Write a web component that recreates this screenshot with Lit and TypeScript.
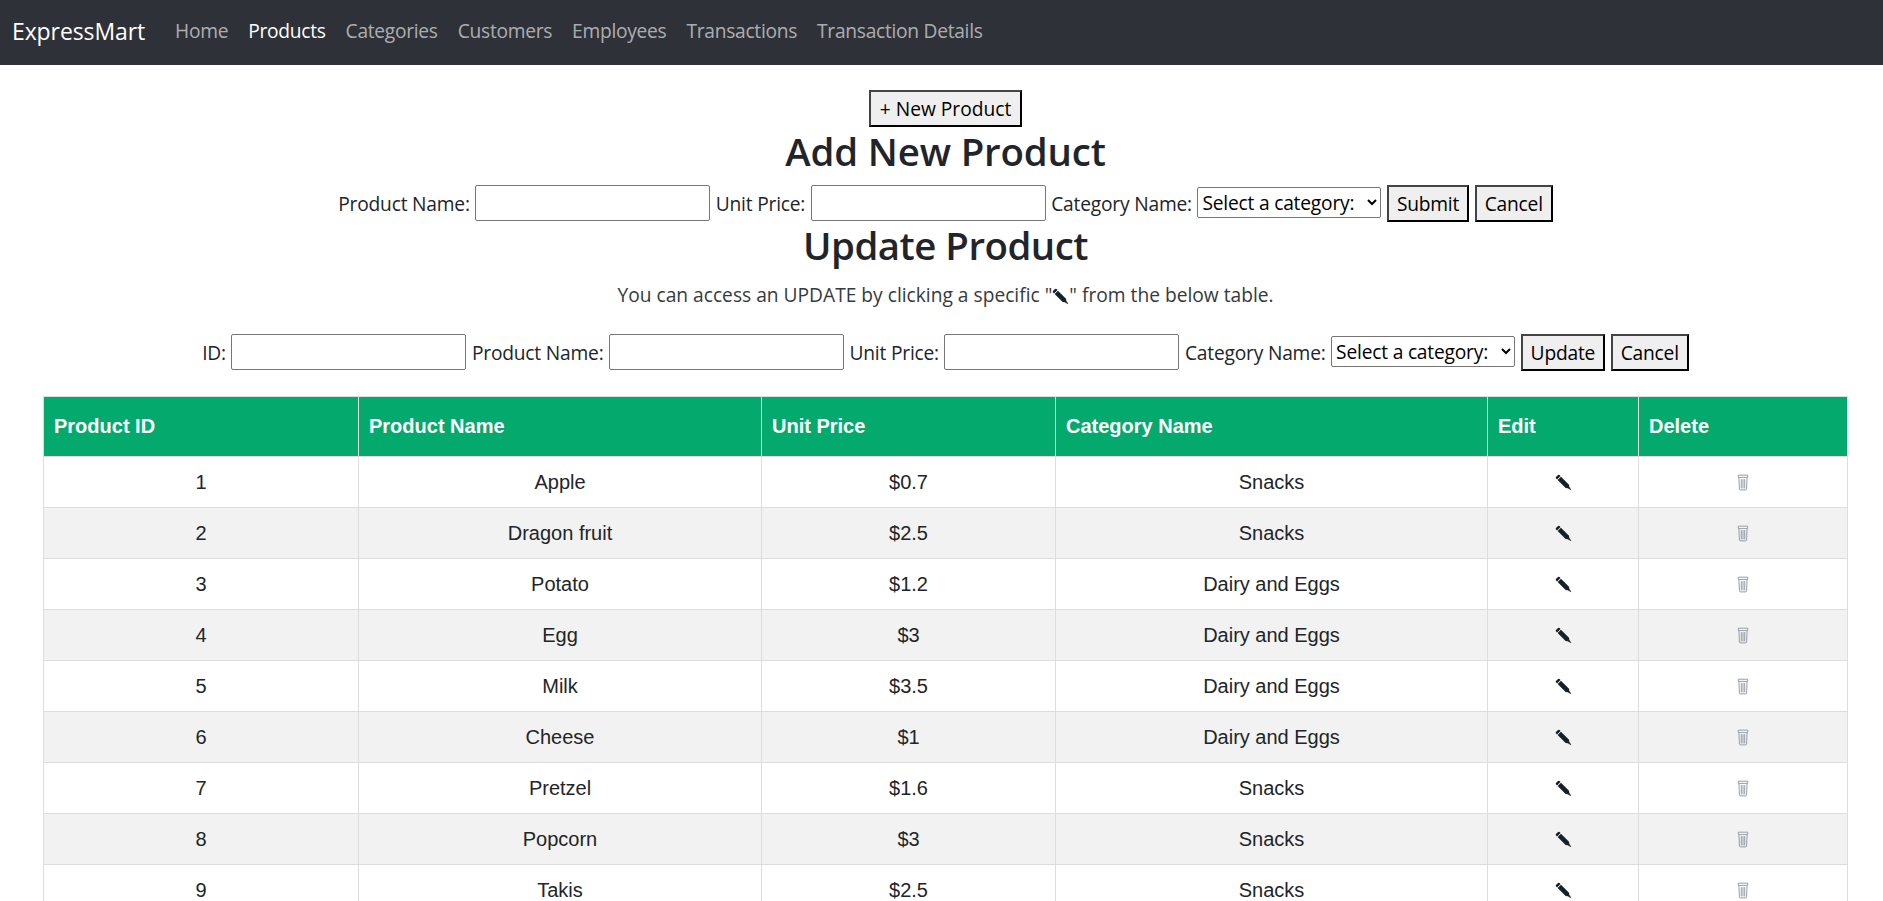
import { LitElement, html, css, svg } from 'lit';
import { customElement } from 'lit/decorators.js';

const PRODUCTS = [
  [1, 'Apple', '$0.7', 'Snacks'],
  [2, 'Dragon fruit', '$2.5', 'Snacks'],
  [3, 'Potato', '$1.2', 'Dairy and Eggs'],
  [4, 'Egg', '$3', 'Dairy and Eggs'],
  [5, 'Milk', '$3.5', 'Dairy and Eggs'],
  [6, 'Cheese', '$1', 'Dairy and Eggs'],
  [7, 'Pretzel', '$1.6', 'Snacks'],
  [8, 'Popcorn', '$3', 'Snacks'],
  [9, 'Takis', '$2.5', 'Snacks'],
];

const NAV = ['Home', 'Products', 'Categories', 'Customers', 'Employees', 'Transactions', 'Transaction Details'];

const pencil = html`<svg class="pencil" viewBox="0 0 16 16" width="17" height="17">
  <path d="M.9 2.9 L2.9 .9 Q3.6 .4 4.3 1 L5.2 1.9 L1.9 5.2 L1 4.3 Q.4 3.6 .9 2.9Z" fill="#1c1c1c"/>
  <path d="M5.6 2.5 L13.2 10 L13.7 13.7 L10 13.2 L2.5 5.6Z" fill="#14212c"/>
  <path d="M13.9 12.3 L15.4 15.4 L12.3 13.9Z" fill="#333"/>
</svg>`;

const trash = svg`<svg class="trash" viewBox="0 0 14 20" width="12" height="17" fill="none" stroke="#8f95a1" stroke-width="1.1">
  <path d="M1.5 4 H12.5 V1.4 H1.5Z" fill="#fff"/>
  <path d="M2.2 4.2 L2.8 17.6 Q3 18.7 3.8 18.7 H10.2 Q11 18.7 11.2 17.6 L11.8 4.2"/>
  <path d="M5 6 V17 M7 6 V17 M9 6 V17"/>
</svg>`;

@customElement('app-root')
export class AppRoot extends LitElement {
  static styles = css`
    :host {
      display: block;
      font-family: 'Open Sans', 'Noto Sans', sans-serif;
      font-size: 19.2px;
      letter-spacing: -0.2px;
      color: #212529;
      text-align: center;
      background: #fff;
      height: 901px;
      overflow: hidden;
    }
    .navbar {
      display: flex;
      align-items: center;
      height: 65px;
      box-sizing: border-box;
      background: #2e3138;
      padding: 0 12px 4px;
      text-align: left;
    }
    .brand {
      color: #fff;
      font-size: 23px;
      letter-spacing: -0.1px;
      margin-right: 20px;
    }
    .nav-link {
      color: rgba(255, 255, 255, 0.62);
      padding: 0 10px;
      letter-spacing: -0.28px;
    }
    .nav-link.active {
      color: #fff;
    }
    .content {
      padding: 25px 0 0 8px;
    }
    button {
      font: inherit;
      letter-spacing: inherit;
      color: #000;
      background: #efefef;
      border: 2px solid;
      border-color: #444 #000 #000 #444;
      padding: 1px 8px;
      height: 37px;
      border-radius: 0;
    }
    .new-btn {
      letter-spacing: 0;
      padding: 1px 9px;
    }
    h2 {
      margin: 0;
      font-size: 38.4px;
      font-weight: 600;
      line-height: 46px;
    }
    .add-title {
      padding-top: 1px;
      margin-bottom: 11px;
      letter-spacing: -0.15px;
    }
    .update-title {
      letter-spacing: -0.5px;
    }
    .form-row {
      display: flex;
      justify-content: center;
      align-items: center;
      gap: 5.5px;
      height: 37px;
    }
    input {
      width: 235px;
      height: 36px;
      box-sizing: border-box;
      border: 1px solid #767676;
      border-radius: 2px;
      padding: 0;
      margin-bottom: 1px;
    }
    select {
      font: inherit;
      letter-spacing: inherit;
      height: 31px;
      width: 184px;
      padding: 0;
      margin-bottom: 2px;
      color: #000;
      background: #fff;
      border: 1px solid #767676;
      border-radius: 2px;
    }
    .hint {
      margin: 14px 0 0;
      height: 26px;
      line-height: 26px;
      letter-spacing: 0;
      color: #343a40;
    }
    .hint .pencil {
      vertical-align: -3px;
    }
    .update-row {
      margin-top: 26px;
    }
    table {
      margin: 25px 0 0 35px;
      width: 1804px;
      table-layout: fixed;
      border-collapse: collapse;
      font-family: 'Liberation Sans', Arial, sans-serif;
      font-size: 20px;
      letter-spacing: 0;
      color: #212529;
    }
    th {
      height: 60px;
      padding: 0 0 0 10px;
      box-sizing: border-box;
      background: #04aa6d;
      color: #fff;
      text-align: left;
      font-weight: 700;
      border: 1px solid #ddd;
    }
    td {
      height: 51px;
      padding: 0;
      box-sizing: border-box;
      border: 1px solid #ddd;
    }
    tr:nth-child(even) td {
      background: #f2f2f2;
    }
    td svg {
      display: block;
      margin: 0 auto;
    }
  `;

  private field(label: string) {
    return html`<label>${label}</label><input type="text" />`;
  }

  private categorySelect() {
    return html`<select><option>Select a category:</option></select>`;
  }

  render() {
    return html`
      <nav class="navbar">
        <span class="brand">ExpressMart</span>
        ${NAV.map((n) => html`<span class="nav-link ${n === 'Products' ? 'active' : ''}">${n}</span>`)}
      </nav>
      <div class="content">
        <button class="new-btn">+ New Product</button>
        <h2 class="add-title">Add New Product</h2>
        <div class="form-row">
          ${this.field('Product Name:')} ${this.field('Unit Price:')}
          <label>Category Name:</label>${this.categorySelect()}
          <button>Submit</button><button>Cancel</button>
        </div>
        <h2 class="update-title">Update Product</h2>
        <p class="hint">You can access an UPDATE by clicking a specific "${pencil}" from the below table.</p>
        <div class="form-row update-row">
          ${this.field('ID:')} ${this.field('Product Name:')} ${this.field('Unit Price:')}
          <label>Category Name:</label>${this.categorySelect()}
          <button>Update</button><button>Cancel</button>
        </div>
        <table>
          <colgroup>
            <col style="width:315px" /><col style="width:403px" /><col style="width:294px" />
            <col style="width:432px" /><col style="width:151px" /><col style="width:209px" />
          </colgroup>
          <thead>
            <tr>
              <th>Product ID</th><th>Product Name</th><th>Unit Price</th>
              <th>Category Name</th><th>Edit</th><th>Delete</th>
            </tr>
          </thead>
          <tbody>
            ${PRODUCTS.map(
              (p) => html`<tr>
                ${p.map((v) => html`<td>${v}</td>`)}
                <td>${pencil}</td>
                <td>${trash}</td>
              </tr>`
            )}
          </tbody>
        </table>
      </div>
    `;
  }
}
